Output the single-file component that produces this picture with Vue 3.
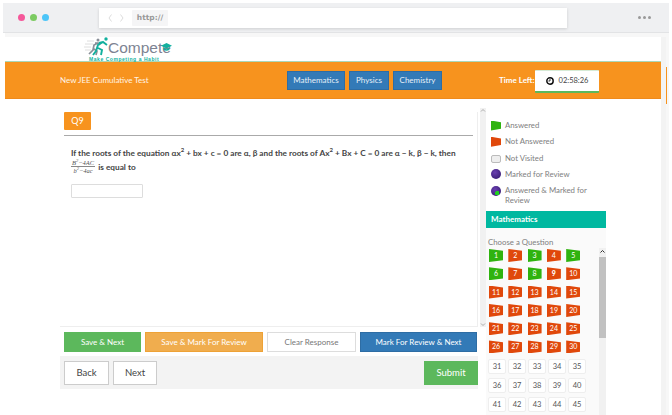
<script setup>
const legend = [
  { k: 'green', t: 'Answered' },
  { k: 'red', t: 'Not Answered' },
  { k: 'grey', t: 'Not Visited' },
  { k: 'purple', t: 'Marked for Review' },
  { k: 'both', t: 'Answered & Marked for Review' }
]
const greens = [1, 3, 5, 6, 8]
const flagged = Array.from({ length: 30 }, (_, i) => i + 1)
const plain = Array.from({ length: 15 }, (_, i) => i + 31)
</script>

<template>
  <div class="frame">
    <header class="chrome">
      <div class="dots">
        <i class="dot pink"></i><i class="dot lime"></i><i class="dot sky"></i>
      </div>
      <div class="address">
        <svg class="nav" width="16" height="8" viewBox="0 0 16 8">
          <path d="M3.500.5 1 4l2.500 3.500M12.500.5 15 4l-2.500 3.500" fill="none" stroke="#dcdcdc" stroke-width="1"/>
        </svg>
        <span class="http">http://</span>
      </div>
      <div class="more"><i></i><i></i><i></i></div>
    </header>

    <div class="body-row">
      <div class="page">
        <div class="logo-row">
          <div class="logo">
            <svg class="runner" width="26" height="20" viewBox="0 0 26 20">
              <path d="M1 7h8M0 10h7M1 13h6M3 4h7" stroke="#dedede" stroke-width="1"/>
              <circle cx="14" cy="3" r="1.500" fill="#8a8f98"/>
              <path d="M5 17l4-4 1-5 4-2 2 2M10 12l3 2-1 4M14 6l-3 0" fill="none" stroke="#8a8f98" stroke-width="1.700"/>
              <circle cx="22" cy="2" r="1.700" fill="#12b09e"/>
              <path d="M9 18l3-4 2-6 5-3 4 3M14 11l4 2-1 5M19 5l-4 1" fill="none" stroke="#12b09e" stroke-width="1.900"/>
            </svg>
            <div class="wordmark">
              <span class="compete">Compete</span>
              <span class="tag">Make Competing a Habit</span>
              <svg class="cap" width="11" height="8" viewBox="0 0 11 8">
                <path d="M5.500 0 11 2.700 5.500 5.400 0 2.700Z" fill="#12b09e"/>
                <path d="M2.500 4.700v2c2 1.500 4 1.500 6 0v-2l-3 1.500Z" fill="#12b09e"/>
              </svg>
            </div>
          </div>
        </div>

        <div class="topbar">
          <span class="test-name">New JEE Cumulative Test</span>
          <nav class="tabs">
            <span class="tab w-math">Mathematics</span>
            <span class="tab w-phys">Physics</span>
            <span class="tab w-chem">Chemistry</span>
          </nav>
          <span class="time-label">Time Left:</span>
          <div class="timer">
            <svg width="8" height="8" viewBox="0 0 10 10">
              <circle cx="5" cy="5" r="4" fill="#fff" stroke="#111" stroke-width="1.800"/>
              <path d="M5 2.500V5H3" fill="none" stroke="#111" stroke-width="1"/>
            </svg>
            <span>02:58:26</span>
          </div>
        </div>

        <div class="content">
          <main class="left">
            <section class="question">
              <span class="badge">Q9</span>
              <hr class="rule" />
              <div class="q-text">
                <p>If the roots of the equation αx<sup>2</sup> + bx + c = 0 are α, β and the roots of Αx<sup>2</sup> + Bx + C = 0 are α − k, β − k, then</p>
                <p class="second">
                  <span class="frac">
                    <span class="num">B<sup>2</sup>−4AC</span>
                    <span class="den">b<sup>2</sup>−4ac</span>
                  </span>
                  <span>is equal to</span>
                </p>
              </div>
              <input class="answer" type="text" />
            </section>

            <div class="actions">
              <button class="btn save">Save &amp; Next</button>
              <button class="btn mark-save">Save &amp; Mark For Review</button>
              <button class="btn clear">Clear Response</button>
              <button class="btn mark">Mark For Review &amp; Next</button>
            </div>

            <div class="footer">
              <button class="fbtn">Back</button>
              <button class="fbtn next">Next</button>
              <button class="fbtn submit">Submit</button>
            </div>
          </main>

          <div class="legend-scroll">
            <svg width="6" height="5" viewBox="0 0 6 5"><path d="M1 3.500 3 1.500l2 2" fill="none" stroke="#999" stroke-width=".8"/></svg>
            <svg width="6" height="5" viewBox="0 0 6 5"><path d="M1 1.500 3 3.500l2-2" fill="none" stroke="#999" stroke-width=".8"/></svg>
          </div>

          <aside class="side">
            <ul class="legend">
              <li v-for="item in legend" :key="item.k">
                <span class="mark-icon" :class="item.k"></span>
                <span>{{ item.t }}</span>
              </li>
            </ul>
            <div class="subject">Mathematics</div>
            <div class="palette">
              <div class="palette-body">
                <div class="choose">Choose a Question</div>
                <div class="flags">
                  <span
                    v-for="n in flagged"
                    :key="n"
                    class="flag"
                    :class="[greens.includes(n) ? 'flag-green' : 'flag-red', { strong: n === 9 }]"
                  >{{ n }}</span>
                </div>
                <div class="boxes">
                  <span v-for="n in plain" :key="n" class="box">{{ n }}</span>
                </div>
              </div>
              <div class="grid-scroll">
                <svg width="7" height="7" viewBox="0 0 7 7"><path d="M1.500 4.500 3.500 2.500l2 2" fill="none" stroke="#333" stroke-width="1"/></svg>
                <div class="thumb"></div>
              </div>
            </div>
          </aside>
        </div>
      </div>
      <div class="gutter"><i class="gutter-line"></i></div>
    </div>
  </div>
</template>

<style>
html, body { margin: 0; background: #fff; overflow: hidden; }
</style>

<style scoped>
.frame {
  width: 666px;
  height: 412px;
  margin: 3px 3px 0;
  font-family: Lato, "Open Sans", sans-serif;
  color: #555;
  overflow: hidden;
}
.chrome {
  height: 30px;
  background: #eff0f2;
  border-bottom: 1px solid #e2e3e5;
  box-sizing: border-box;
  display: flex;
  align-items: center;
  padding: 0 16px 0 15px;
}
.dots { display: flex; gap: 5px; width: 81px; }
.dot { width: 7px; height: 7px; border-radius: 50%; }
.pink { background: #f5589a; }
.lime { background: #7ccb62; }
.sky { background: #4cc5f8; }
.address {
  width: 468px;
  height: 20px;
  background: #fff;
  box-shadow: 0 1px 3px rgba(0, 0, 0, .14);
  display: flex;
  align-items: center;
  padding-left: 9px;
  box-sizing: border-box;
  margin-top: 1px;
}
.nav { margin-right: 8px; }
.http {
  background: #f5f5f6;
  height: 16px;
  width: 36px;
  text-align: center;
  font: 700 7.500px/15px "DejaVu Sans", sans-serif;
  color: #999;
  border-radius: 1px;
}
.more { margin-left: auto; display: flex; gap: 2px; padding-right: 2px; }
.more i { width: 3px; height: 3px; border-radius: 50%; background: #999; }

.body-row { display: flex; margin: 0 0 0 2px; background: #f7f7f7; padding-top: 4px; height: 382px; box-sizing: border-box; }
.page {
  width: 656px;
  background: #fff;
  height: 378px;
  border-bottom: 1px solid #eee;
  box-sizing: content-box;
}
.gutter { width: 5px; background: #f3f3f3; position: relative; }
.gutter-line { position: absolute; right: -1px; top: 30px; width: 1px; height: 37px; background: #f7931e; }

.logo-row { height: 25px; border-bottom: 1px solid #a9d8b8; box-sizing: border-box; }
.logo { display: flex; margin-left: 79px; }
.runner { margin-right: -2px; }
.wordmark { position: relative; width: 70px; height: 24px; }
.compete {
  display: block;
  font: 400 15.500px/14px "Liberation Sans", sans-serif;
  color: #7d8392;
  padding-top: 4px;
}
.tag {
  position: absolute;
  left: -19px;
  top: 20px;
  font: 700 5px/5px "Liberation Sans", sans-serif;
  letter-spacing: .55px;
  color: #11b3a0;
  white-space: nowrap;
}
.cap { position: absolute; left: 53px; top: 6px; }

.topbar {
  height: 36px;
  background: #f7931e;
  border-bottom: 1px solid #ee8a1c;
  display: flex;
  align-items: center;
  color: #fff;
}
.test-name { width: 282px; padding-left: 55px; box-sizing: border-box; font-size: 8px; color: #fff4e6; }
.tabs { display: flex; gap: 4px; width: 212px; }
.tab {
  background: #337ab7;
  border: 1px solid #2e6da4;
  color: #e8f0f8;
  height: 19px;
  line-height: 17px;
  box-sizing: border-box;
  font-size: 8px;
  text-align: center;
}
.w-math { width: 58px; }
.w-phys { width: 40px; }
.w-chem { width: 49px; }
.time-label { font-weight: 700; font-size: 8px; width: 36px; }
.timer {
  width: 64px;
  height: 23px;
  margin-top: 2px;
  background: #fff;
  border-bottom: 2px solid #5cb85c;
  border-top: 1px solid #d6ead6;
  box-sizing: border-box;
  display: flex;
  align-items: center;
  justify-content: center;
  gap: 5px;
  color: #444;
  font-size: 7.500px;
  border-radius: 1px;
}

.content { display: flex; height: 315px; align-items: flex-start; }
.left { width: 418px; margin-left: 55px; padding-top: 13px; box-sizing: border-box; }
.question {
  height: 215px;
  border-right: 1px solid #eee;
  border-bottom: 1px solid #eee;
  padding: 0 4px;
  box-sizing: border-box;
}
.badge {
  display: block;
  width: 27px;
  height: 18px;
  background: #f7931e;
  color: #fff;
  font-size: 9px;
  line-height: 18px;
  text-align: center;
  border-radius: 1px;
}
.rule { border: 0; border-top: 1px solid #aaa; margin: 5px 0 0; width: 409px; }
.q-text { padding: 12px 0 0 7px; color: #444; font-size: 8.250px; font-weight: 700; line-height: 10px; }
.q-text p { margin: 0; white-space: nowrap; }
.q-text sup { font-size: 6px; line-height: 0; }
.second { display: flex; align-items: center; gap: 3px; margin-top: 1px !important; }
.frac {
  display: flex;
  flex-direction: column;
  align-items: center;
  font: italic 400 6.500px/7px "Liberation Serif", serif;
  color: #555;
}
.frac sup { font-size: 4.500px !important; }
.num { border-bottom: 1px solid #888; padding: 0 1px; }
.answer {
  display: block;
  width: 72px;
  height: 14px;
  box-sizing: border-box;
  margin: 10px 0 0 7px;
  border: 1px solid #ddd;
  border-radius: 1px;
  background: #fff;
  padding: 0;
}

.actions { display: flex; margin-top: 5px; padding-left: 4px; }
.btn {
  height: 20px;
  box-sizing: border-box;
  border: 1px solid #ddd;
  font: 400 8px/1 Lato, sans-serif;
  color: #fff;
  padding: 0;
  border-radius: 0;
}
.save { width: 77px; margin-right: 4px; background: #5cb85c; border-color: #5cb85c; }
.mark-save { width: 118px; margin-right: 4px; background: #f0ad4e; border-color: #eea236; }
.clear { width: 89px; margin-right: 4px; background: #fff; color: #777; }
.mark { width: 117px; background: #337ab7; border-color: #2e6da4; }
.footer {
  height: 33px;
  margin-top: 4px;
  background: #f3f3f3;
  display: flex;
  align-items: flex-start;
  padding: 5px 0 0 4px;
  box-sizing: border-box;
}
.fbtn {
  width: 45px;
  height: 24px;
  box-sizing: border-box;
  background: #fff;
  border: 1px solid #ccc;
  font: 400 9.500px/1 Lato, sans-serif;
  color: #444;
  padding: 0;
}
.next { width: 44px; margin-left: 4px; }
.submit { width: 54px; margin-left: auto; background: #5cb85c; border-color: #5cb85c; color: #fff; }

.legend-scroll {
  width: 6px;
  height: 219px;
  margin-top: 9px;
  margin-left: 2px;
  background: #f1f1f1;
  display: flex;
  flex-direction: column;
  justify-content: space-between;
  align-items: center;
}
.side { width: 120px; }
.legend {
  list-style: none;
  margin: 0;
  padding: 22px 0 0 5px;
  font-size: 7.800px;
  line-height: 9.500px;
  height: 112px;
  box-sizing: border-box;
  color: #808080;
}
.legend li { display: flex; align-items: flex-start; gap: 4px; margin-bottom: 6.800px; width: 104px; }
.mark-icon { flex: none; width: 10px; height: 10px; margin-top: -.5px; }
.green { background: #2fb30f; clip-path: polygon(0 0, 100% 18%, 100% 82%, 0 100%); }
.red { background: #e0480b; clip-path: polygon(0 0, 100% 18%, 100% 82%, 0 100%); }
.grey { background: #eee; border: 1px solid #bbb; border-radius: 2px; box-sizing: border-box; height: 8px; margin-top: 1px; }
.purple { border-radius: 50%; background: radial-gradient(circle at 40% 35%, #6a3fb0, #2d1668); }
.both { border-radius: 50%; background: radial-gradient(circle at 62% 72%, #1fd01f 0 22%, transparent 25%), radial-gradient(circle at 40% 35%, #6a3fb0, #2d1668); }

.subject {
  height: 17px;
  background: #00b8a0;
  color: #fff;
  font-size: 8px;
  font-weight: 700;
  line-height: 17px;
  padding-left: 5px;
}
.palette { display: flex; background: #fafafa; height: 187px; overflow: hidden; }
.palette-body { width: 113px; box-sizing: border-box; padding: 9px 0 0 2px; }
.choose { font-size: 7.800px; line-height: 10px; color: #808080; }
.flags {
  display: grid;
  grid-template-columns: repeat(5, 19.300px);
  grid-auto-rows: 18.300px;
  margin: 2px 0 0 1px;
}
.flag {
  width: 14px;
  height: 13px;
  font-size: 7px;
  line-height: 13px;
  text-align: center;
  color: #fff;
  clip-path: polygon(0 0, 100% 14%, 100% 86%, 0 100%);
}
.flag-green { background: #2fb30f; }
.flag-red { background: #e0480b; }
.strong { font-weight: 900; }
.boxes {
  display: grid;
  grid-template-columns: repeat(5, 20px);
  grid-auto-rows: 19.300px;
  margin-top: 0;
}
.box {
  width: 18px;
  height: 15px;
  box-sizing: border-box;
  background: #fff;
  border: 1px solid #eee;
  border-radius: 2px;
  font-size: 7.500px;
  line-height: 13px;
  text-align: center;
  color: #555;
}
.grid-scroll { width: 7px; margin-top: 20px; background: #f1f1f1; display: flex; flex-direction: column; }
.thumb { height: 81px; margin-top: 2px; background: #c1c1c1; }
</style>
